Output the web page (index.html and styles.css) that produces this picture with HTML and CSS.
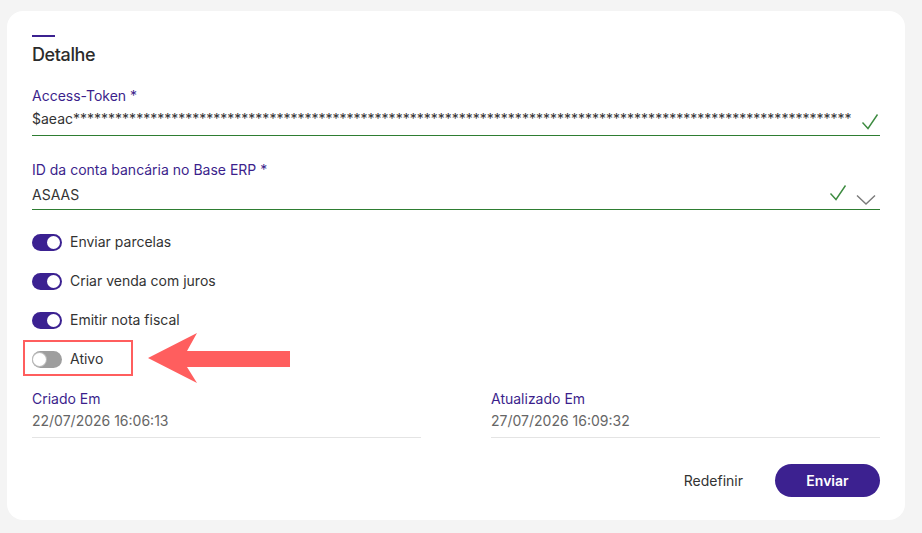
FILE: index.html
```html
<!DOCTYPE html>
<html lang="pt">
<head>
<meta charset="utf-8">
<title>Detalhe</title>
<link rel="stylesheet" href="styles.css">
</head>
<body>
<div class="card">
  <div class="accent"></div>
  <h2 class="title">Detalhe</h2>

  <div class="field f1">
    <div class="label">Access-Token *</div>
    <div class="input">
      <span class="value">$aeac***************************************************************************************************************</span>
      <svg class="check c1" width="18" height="18" viewBox="0 0 18 18"><path d="M1.5 9.5 L7 15.5 L16.5 1.5" fill="none" stroke="#3d8b40" stroke-width="1.4"/></svg>
    </div>
  </div>

  <div class="field f2">
    <div class="label">ID da conta bancária no Base ERP *</div>
    <div class="input">
      <span class="value">ASAAS</span>
      <svg class="check c2" width="18" height="18" viewBox="0 0 18 18"><path d="M1.5 9.5 L7 15.5 L16.5 1.5" fill="none" stroke="#3d8b40" stroke-width="1.4"/></svg>
      <svg class="chev" width="20" height="12" viewBox="0 0 20 12"><path d="M1 1.5 L10 10 L19 1.5" fill="none" stroke="#7a7a7a" stroke-width="1.4"/></svg>
    </div>
  </div>

  <div class="toggles">
    <div class="trow"><span class="tog on"><span class="knob"></span></span><span class="tlabel">Enviar parcelas</span></div>
    <div class="trow"><span class="tog on"><span class="knob"></span></span><span class="tlabel">Criar venda com juros</span></div>
    <div class="trow"><span class="tog on"><span class="knob"></span></span><span class="tlabel">Emitir nota fiscal</span></div>
    <div class="trow last"><span class="tog off"><span class="knob"></span></span><span class="tlabel">Ativo</span>
      <span class="hl-box"></span>
      <svg class="arrow" width="146" height="54" viewBox="0 0 146 54"><polygon points="2,25 51,0 41,18 144,18 144,34 41,34 51,50" fill="#ff5e5e"/></svg>
    </div>
  </div>

  <div class="dates">
    <div class="dcol">
      <div class="label">Criado Em</div>
      <div class="dval">22/07/2026 16:06:13</div>
    </div>
    <div class="dcol">
      <div class="label">Atualizado Em</div>
      <div class="dval">27/07/2026 16:09:32</div>
    </div>
  </div>

  <div class="actions">
    <button class="btn-link">Redefinir</button>
    <button class="btn-primary">Enviar</button>
  </div>
</div>
</body>
</html>
```

FILE: styles.css
```css
html, body {
  margin: 0;
  padding: 0;
  background: #f4f4f4;
  font-family: Inter, "Noto Sans", sans-serif;
}
.card {
  box-sizing: border-box;
  margin: 11px 0 0 7px;
  width: 898px;
  height: 509px;
  background: #fff;
  border-radius: 16px;
  padding: 24px 25px 24px 25px;
}
.accent {
  width: 23px;
  height: 2px;
  background: #3b2190;
}
.title {
  margin: 7px 0 0 0;
  font-size: 18px;
  line-height: 22px;
  font-weight: 500;
  color: #2b2b2b;
  letter-spacing: -0.4px;
}
.label {
  font-size: 14px;
  line-height: 20px;
  color: #3c1f8c;
}
.field.f1 { margin-top: 20px; }
.field.f2 { margin-top: 24px; }
.input {
  display: flex;
  align-items: center;
  margin-top: 3px;
  height: 26px;
  border-bottom: 1px solid #2e7d32;
  position: relative;
}
.f2 .input {
  margin-top: 5px;
  height: 24px;
}
.value {
  flex: 1;
  font-size: 14px;
  line-height: 20px;
  color: #333;
  align-self: flex-start;
  white-space: nowrap;
  overflow: hidden;
}
.check.c1 { margin: 0 1px 0 8px; }
.check.c2 { margin: -8px 9px 0 0; }
.chev { margin: 6px 4px 0 0; }
.toggles {
  margin-top: 22px;
  display: flex;
  flex-direction: column;
  gap: 19px;
}
.trow {
  display: flex;
  align-items: center;
  height: 20px;
  position: relative;
}
.tog {
  box-sizing: border-box;
  width: 30px;
  height: 17px;
  border-radius: 9px;
  position: relative;
  margin-right: 8px;
}
.tog.on { background: #3b2191; }
.tog.off { background: #9e9e9e; }
.knob {
  position: absolute;
  top: 2px;
  width: 13px;
  height: 13px;
  border-radius: 50%;
  background: #fff;
}
.tog.on .knob { right: 2px; }
.tog.off .knob { left: 1px; box-shadow: 0 0 0 1px #bdbdbd; }
.tlabel {
  font-size: 14px;
  line-height: 20px;
  color: #333;
}
.hl-box {
  position: absolute;
  left: -9px;
  top: -9px;
  width: 110px;
  height: 36px;
  box-sizing: border-box;
  border: 2px solid #ff5e5e;
}
.arrow {
  position: absolute;
  left: 114px;
  top: -16px;
}
.dates {
  margin-top: 20px;
  display: flex;
  gap: 70px;
}
.dcol {
  flex: 1;
  border-bottom: 1px solid #e4e4e4;
  padding-bottom: 6px;
}
.dval {
  margin-top: 2px;
  font-size: 14px;
  line-height: 20px;
  color: #666;
}
.actions {
  margin-top: 26px;
  display: flex;
  justify-content: flex-end;
  align-items: center;
}
.btn-link {
  border: 0;
  background: none;
  font-family: inherit;
  font-size: 14px;
  color: #333;
  padding: 0;
  margin-right: 32px;
  cursor: pointer;
}
.btn-primary {
  border: 0;
  background: #3c2190;
  color: #fff;
  font-family: inherit;
  font-size: 14px;
  font-weight: 600;
  width: 105px;
  height: 33px;
  border-radius: 17px;
  cursor: pointer;
}
```
